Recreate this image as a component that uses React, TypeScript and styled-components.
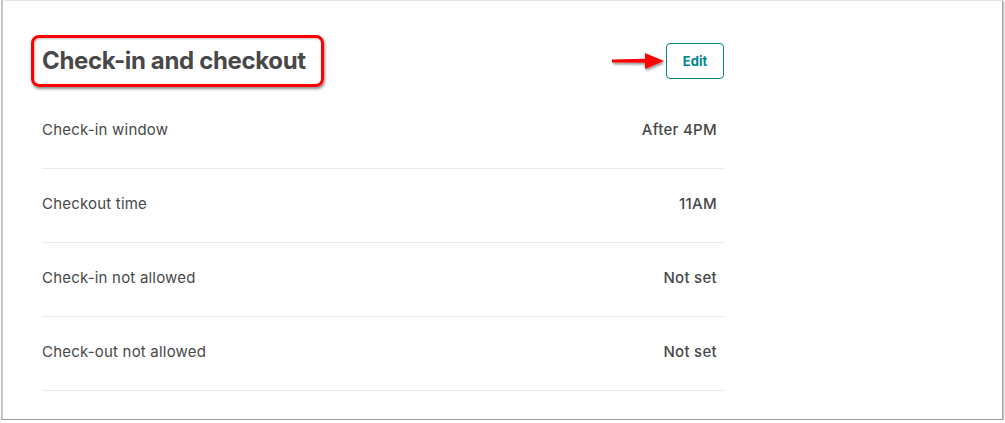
import React from "react";
import styled, { createGlobalStyle } from "styled-components";

const Global = createGlobalStyle`
  html, body { margin: 0; padding: 0; background: #ffffff; }
  body { font-family: Inter, "Noto Sans", "Liberation Sans", sans-serif; color: #484848; }
`;

const Frame = styled.div`
  box-sizing: border-box;
  margin-left: 1px;
  width: 1002px;
  height: 420px;
  background: #fff;
  border-left: 2px solid #c4c4c4;
  border-top: 1px solid #e4e4e4;
  border-right: 1px solid #a8a8a8;
  border-bottom: 1px solid #9a9a9a;
  box-shadow: 1px 1px 2px rgba(0, 0, 0, 0.3);
  padding: 34px 0 0 39px;
`;

const Section = styled.section`
  width: 683px;
  display: flex;
  flex-direction: column;
`;

const Header = styled.div`
  height: 52px;
  display: flex;
  align-items: center;
  justify-content: space-between;
  margin-bottom: 8px;
`;

const TitleWrap = styled.div`
  position: relative;
`;

const Title = styled.h2`
  margin: 0;
  font-size: 24px;
  font-weight: 700;
  line-height: 30px;
  color: #484848;
  letter-spacing: -0.35px;
`;

const Highlight = styled.div`
  position: absolute;
  left: -11px;
  top: -11px;
  right: -18px;
  bottom: -11px;
  border: 3.5px solid #ff0000;
  border-radius: 8px;
  box-shadow: 1px 2px 3px rgba(0, 0, 0, 0.45), inset 1px 1px 2px rgba(0, 0, 0, 0.25);
  pointer-events: none;
`;

const ButtonWrap = styled.div`
  position: relative;
  display: flex;
`;

const EditButton = styled.button`
  box-sizing: border-box;
  width: 58px;
  height: 36px;
  margin-right: 1px;
  border: 1px solid #008489;
  border-radius: 4px;
  background: #fff;
  color: #008489;
  font-family: inherit;
  font-size: 13px;
  font-weight: 700;
  cursor: pointer;
`;

const Arrow = styled.svg`
  position: absolute;
  right: 100%;
  top: 9px;
  overflow: visible;
`;

const Row = styled.div`
  display: flex;
  justify-content: space-between;
  align-items: center;
  padding: 23px 8px 26px 0;
  line-height: 24px;
  border-bottom: 1px solid #ebebeb;
`;

const Label = styled.span`
  font-size: 15px;
  font-weight: 400;
  color: #484848;
  letter-spacing: 0.2px;
`;

const Value = styled.span`
  font-size: 15px;
  font-weight: 500;
  color: #484848;
  letter-spacing: 0.3px;
`;

const rows = [
  ["Check-in window", "After 4PM"],
  ["Checkout time", "11AM"],
  ["Check-in not allowed", "Not set"],
  ["Check-out not allowed", "Not set"],
];

export default function App() {
  return (
    <>
      <Global />
      <Frame>
        <Section>
          <Header>
            <TitleWrap>
              <Title>Check-in and checkout</Title>
              <Highlight />
            </TitleWrap>
            <ButtonWrap>
              <Arrow width="56" height="18" viewBox="0 0 56 18">
                <defs>
                  <filter id="sh" x="-20%" y="-50%" width="140%" height="200%">
                    <feDropShadow dx="1" dy="2" stdDeviation="1" floodColor="#000" floodOpacity="0.4" />
                  </filter>
                </defs>
                <g filter="url(#sh)">
                  <path d="M2 7.5 L35 6.8 L35 1 L54 9 L35 17 L35 10.8 L2 10.5 Z" fill="#ff0000" />
                </g>
              </Arrow>
              <EditButton>Edit</EditButton>
            </ButtonWrap>
          </Header>
          {rows.map(([l, v]) => (
            <Row key={l}>
              <Label>{l}</Label>
              <Value>{v}</Value>
            </Row>
          ))}
        </Section>
      </Frame>
    </>
  );
}
